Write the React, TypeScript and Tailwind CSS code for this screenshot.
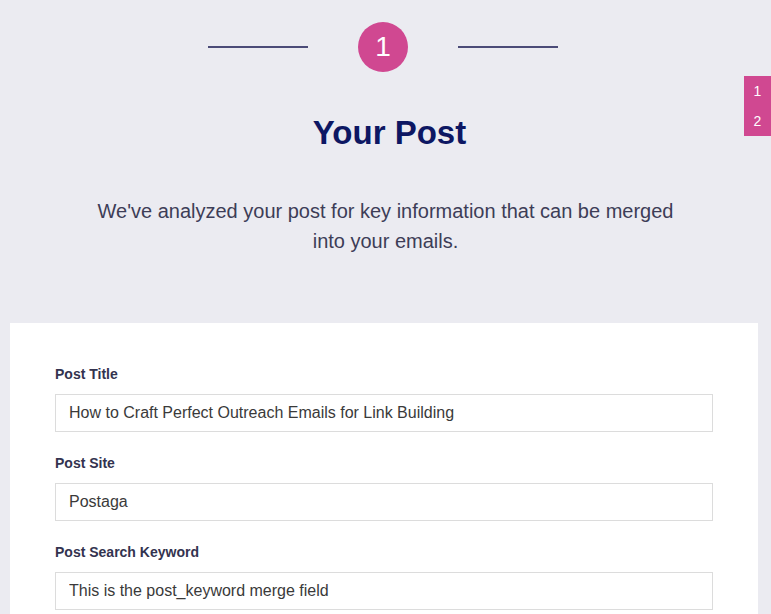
import React from "react";

const FIELDS = [
  { label: "Post Title", value: "How to Craft Perfect Outreach Emails for Link Building" },
  { label: "Post Site", value: "Postaga" },
  { label: "Post Search Keyword", value: "This is the post_keyword merge field" },
];

const App = () => {
  return (
    <div
      className="relative min-h-[614px] bg-[#ebebf1] overflow-hidden"
      style={{ fontFamily: '"Liberation Sans", Arial, sans-serif' }}
    >
      {/* Step indicator */}
      <div className="flex items-center justify-center pt-[22px] pr-[5px]">
        <div className="w-[100px] h-[2px] bg-[#4b4b78]" />
        <div className="mx-[50px] w-[50px] h-[50px] rounded-full bg-[#d04891] flex items-center justify-center text-white text-[28px] leading-none">
          1
        </div>
        <div className="w-[100px] h-[2px] bg-[#4b4b78]" />
      </div>

      {/* Side tab */}
      <div className="absolute right-0 top-[76px] w-[27px] h-[60px] bg-[#d04891] flex flex-col items-center justify-center text-white text-[14px] leading-[30px]">
        <span>1</span>
        <span>2</span>
      </div>

      <h1 className="mt-[41px] pl-[8px] text-center text-[33px] leading-[40px] font-bold text-[#0d1763]">
        Your Post
      </h1>

      <p className="mt-[43px] mx-auto max-w-[592px] text-center text-[20px] leading-[30px] text-[#3d3d57]">
        We've analyzed your post for key information that can be merged into your emails.
      </p>

      {/* Form card */}
      <div className="mt-[67px] ml-[10px] mr-[13px] bg-white px-[45px] pt-[44px] pb-10">
        {FIELDS.map((field, i) => (
          <div key={field.label} className={i > 0 ? "mt-[24px]" : ""}>
            <label className="block text-[14px] leading-[14px] font-bold text-[#33334f] mb-[13px]">
              {field.label}
            </label>
            <input
              readOnly
              value={field.value}
              className="block w-full h-[38px] border border-[#dcdcdc] bg-white px-[13px] text-[16px] text-[#3a3a3a] outline-none"
              style={{ fontFamily: '"Liberation Sans", Arial, sans-serif' }}
            />
          </div>
        ))}
      </div>
    </div>
  );
};

export default App;
